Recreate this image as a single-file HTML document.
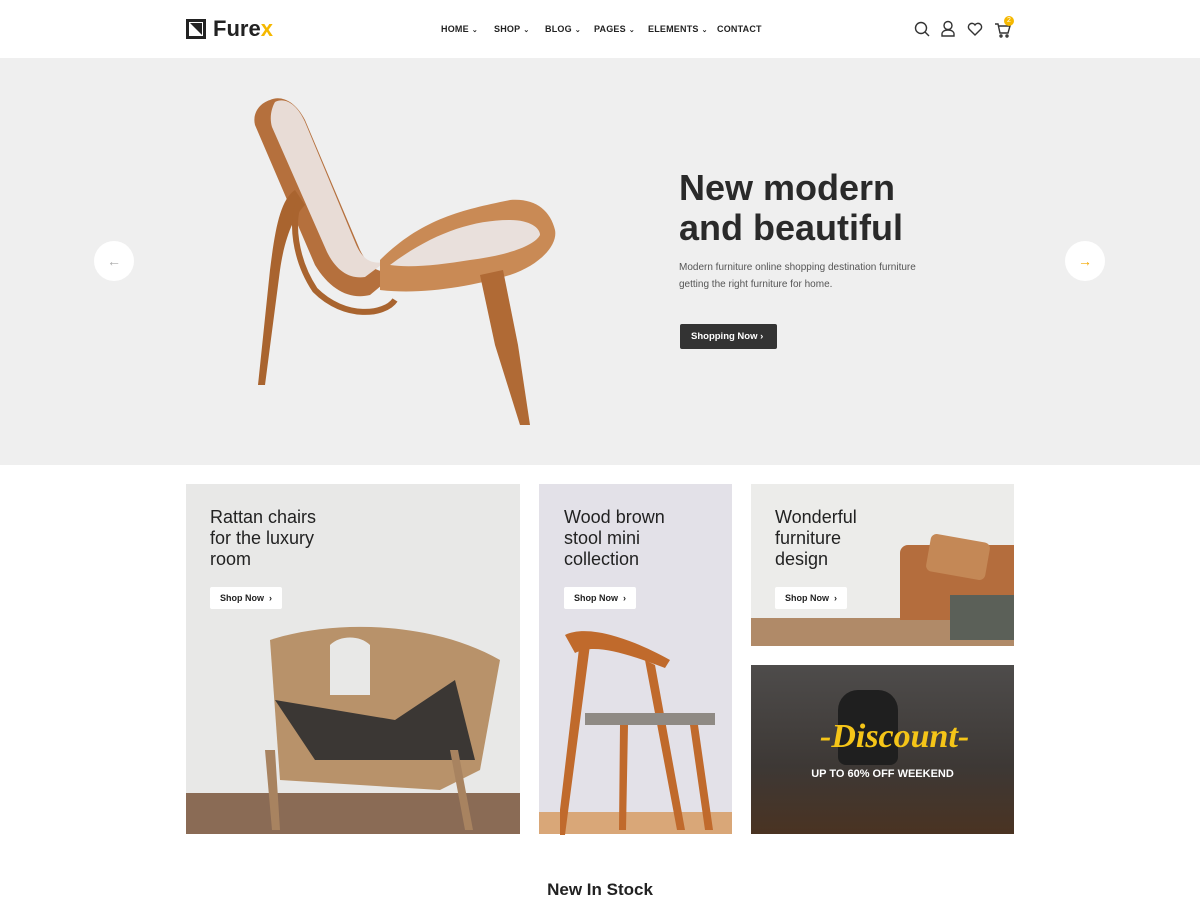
<!DOCTYPE html>
<html><head><meta charset="utf-8"><style>
*{margin:0;padding:0;box-sizing:border-box}
body{width:1200px;height:900px;overflow:hidden;background:#fff;font-family:"Liberation Sans",sans-serif;color:#222;position:relative}
.abs{position:absolute}
.nav a{position:absolute;top:24px;font-size:9px;font-weight:bold;color:#222;letter-spacing:.2px}
.nav a span{font-size:7px;margin-left:3px}
.card h3{position:absolute;font-weight:normal;font-size:18px;line-height:21px;color:#222}
.btn{position:absolute;background:#fff;font-size:9px;font-weight:bold;color:#222;height:22px;line-height:22px;padding:0 10px;border-radius:2px}
</style></head><body>
<div class="abs" style="left:186px;top:19px;width:20px;height:20px;border:3px solid #222"></div>
<div class="abs" style="left:190px;top:23px;width:12px;height:12px;background:#222;clip-path:polygon(0 0,100% 0,100% 100%)"></div>
<div class="abs" style="left:213px;top:16px;font-size:22px;font-weight:bold;color:#222">Fure<span style="color:#f5b800">x</span></div>
<div class="nav">
<a style="left:441px">HOME<span>⌄</span></a>
<a style="left:494px">SHOP<span>⌄</span></a>
<a style="left:545px">BLOG<span>⌄</span></a>
<a style="left:594px">PAGES<span>⌄</span></a>
<a style="left:648px">ELEMENTS<span>⌄</span></a>
<a style="left:717px">CONTACT</a>
</div>
<svg class="abs" style="left:912px;top:19px" width="110" height="22" fill="none" stroke="#333" stroke-width="1.4">
<circle cx="9" cy="9" r="5.5"/><path d="M13 13l4 4"/>
<circle cx="36" cy="6.5" r="4"/><path d="M30 17h12v-2c0-2-2-4-6-4s-6 2-6 4z"/>
<path d="M63 16l-6-6a3.5 3.5 0 0 1 6-4a3.5 3.5 0 0 1 6 4z"/>
<path d="M83 5h3l2 9h8l2-7h-11"/><circle cx="89" cy="17" r="1"/><circle cx="95" cy="17" r="1"/>
</svg>
<div class="abs" style="left:1004px;top:16px;width:10px;height:10px;border-radius:50%;background:#f5b800;color:#fff;font-size:7px;text-align:center;line-height:10px">2</div>
<div class="abs" style="left:0;top:58px;width:1200px;height:407px;background:#efefef"></div>
<svg class="abs" style="left:250px;top:90px" width="320" height="340">
<path d="M20 10c10-5 25 0 35 20l55 130c10 20 20 25 40 20l-30 25c-20 5-40-5-55-30l-60-140c-3-12 5-22 15-25z" fill="#b5703d"/>
<path d="M25 12c10-5 22 2 30 20l50 120c8 20 18 22 30 20l-20 15c-15 2-28-5-38-25l-55-125c-3-10 0-20 3-25z" fill="#e8dcd6"/>
<path d="M130 170c40-40 80-50 130-60c25-2 40 10 45 30c3 15-15 35-45 45c-40 12-90 20-130 15z" fill="#c98a55"/>
<path d="M140 175c40-30 80-45 120-45c20 0 30 8 30 15c-5 10-30 20-70 25c-30 5-60 8-80 5z" fill="#e9e0dc"/>
<path d="M45 100c-15 10-20 40-25 80l-12 115h7l15-115c5-35 15-55 25-65z" fill="#a9642f"/>
<path d="M230 185l15 70l25 80h10l-12-80l-15-75z" fill="#b06a35"/>
<path d="M50 110c-10 20-5 60 15 90c30 30 70 25 80 10" stroke="#a9642f" stroke-width="6" fill="none"/>
</svg>
<div class="abs" style="left:679px;top:168px;font-size:36px;font-weight:bold;line-height:40px;color:#2a2a2a">New modern<br>and beautiful</div>
<div class="abs" style="left:679px;top:259px;font-size:10px;line-height:17px;color:#555">Modern furniture online shopping destination furniture<br>getting the right furniture for home.</div>
<div class="abs" style="left:680px;top:324px;width:97px;height:25px;background:#333;color:#fff;font-size:9.5px;font-weight:bold;line-height:25px;padding-left:11px;border-radius:2px">Shopping Now ›</div>
<div class="abs" style="left:94px;top:241px;width:40px;height:40px;border-radius:50%;background:#fff;color:#aaa;text-align:center;line-height:40px;font-size:14px">←</div>
<div class="abs" style="left:1065px;top:241px;width:40px;height:40px;border-radius:50%;background:#fff;color:#f5a800;text-align:center;line-height:40px;font-size:14px;font-weight:bold">→</div>
<div class="card">
<div class="abs" style="left:186px;top:484px;width:334px;height:350px;background:#e8e8e7"></div>
<div class="abs" style="left:186px;top:793px;width:334px;height:41px;background:#8a6b55"></div>
<svg class="abs" style="left:250px;top:600px" width="260" height="234"><path d="M20 40c60-20 160-20 230 20l-20 110l-40 20l-160-10z" fill="#b8926a"/><path d="M80 45c10-10 30-10 40 0v50h-40z" fill="#e8e8e7"/><path d="M25 100l120 20l60-40l20 80h-160z" fill="#3b3734"/><path d="M15 150h10l5 80h-8zM200 150h8l15 80h-8z" fill="#a88360"/></svg>
<h3 style="left:210px;top:507px">Rattan chairs<br>for the luxury<br>room</h3>
<div class="btn" style="left:210px;top:587px">Shop Now &nbsp;›</div>
<div class="abs" style="left:539px;top:484px;width:193px;height:350px;background:#e3e1e8"></div>
<div class="abs" style="left:539px;top:812px;width:193px;height:22px;background:#d9a778"></div>
<svg class="abs" style="left:560px;top:625px" width="170" height="210" fill="#c06a2c"><path d="M5 10c20-10 60 0 105 25l-5 8c-40-15-70-25-90-15z"/><path d="M20 15l10 5l-25 190h-8zM85 35l10 5l30 165h-8z"/><rect x="25" y="88" width="130" height="12" fill="#8f8a84"/><path d="M60 100h8l-2 105h-7zM130 100h8l15 105h-8z"/></svg>
<h3 style="left:564px;top:507px">Wood brown<br>stool mini<br>collection</h3>
<div class="btn" style="left:564px;top:587px">Shop Now &nbsp;›</div>
<div class="abs" style="left:751px;top:484px;width:263px;height:162px;background:#ececea"></div>
<div class="abs" style="left:751px;top:618px;width:263px;height:28px;background:#b08a68"></div>
<div class="abs" style="left:900px;top:545px;width:114px;height:75px;background:#b46d3d;border-radius:8px 0 0 0"></div>
<div class="abs" style="left:928px;top:538px;width:60px;height:38px;background:#c48856;border-radius:6px;transform:rotate(10deg)"></div>
<div class="abs" style="left:950px;top:595px;width:64px;height:45px;background:#5b6058"></div>
<h3 style="left:775px;top:507px">Wonderful<br>furniture<br>design</h3>
<div class="btn" style="left:775px;top:587px">Shop Now &nbsp;›</div>
<div class="abs" style="left:751px;top:665px;width:263px;height:169px;background:linear-gradient(#4e4c4b,#3d3835 60%,#4a3322)"></div>
<div class="abs" style="left:838px;top:690px;width:60px;height:75px;background:#1f1f1f;border-radius:20px 20px 8px 8px"></div>
<div class="abs" style="left:820px;top:718px;font-family:'Liberation Serif',serif;font-style:italic;font-weight:bold;font-size:34px;color:#f5c518">-Discount-</div>
<div class="abs" style="left:751px;top:768px;width:263px;text-align:center;font-size:11px;font-weight:bold;color:#fff">UP TO 60% OFF WEEKEND</div>
</div>
<div class="abs" style="left:0;top:880px;width:1200px;text-align:center;font-size:17px;font-weight:bold;color:#222">New In Stock</div>
</body></html>
